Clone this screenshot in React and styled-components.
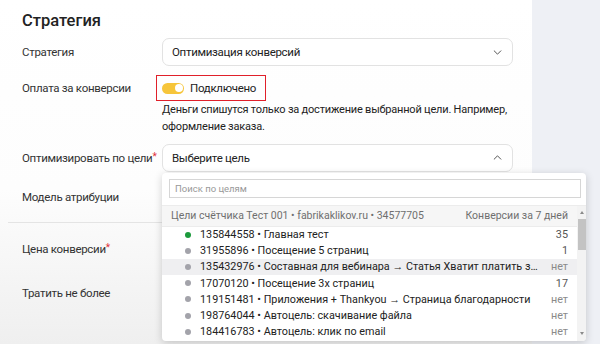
import React from "react";
import styled, { createGlobalStyle } from "styled-components";

const Global = createGlobalStyle`
  html, body { margin: 0; padding: 0; }
  body {
    font-family: Roboto, "Liberation Sans", Arial, sans-serif;
    color: #222;
    -webkit-font-smoothing: antialiased;
  }
`;

const Page = styled.div`
  width: 600px;
  height: 344px;
  display: flex;
  overflow: hidden;
`;

const Panel = styled.div`
  width: 532px;
  flex-shrink: 0;
  padding: 11px 0 0 22px;
  box-sizing: border-box;
  background: linear-gradient(#ffffff 0%, #fdfdfd 55%, #efefef 100%);
  position: relative;
`;

const Side = styled.div`
  flex: 1;
  background: #eef0f5;
`;

const Title = styled.h2`
  margin: 0 0 7px;
  font-size: 16.5px;
  line-height: 20px;
  font-weight: 500;
  color: #222;
`;

const Row = styled.div`
  display: grid;
  grid-template-columns: 140px 351px;
  align-items: ${(p) => p.$align || "center"};
  min-height: ${(p) => p.$h || 28}px;
  margin-top: ${(p) => p.$mt || 0}px;
  margin-bottom: ${(p) => p.$mb || 0}px;
`;

const Label = styled.div`
  font-size: 11.5px;
  letter-spacing: -0.3px;
  color: #333;
  white-space: nowrap;
`;

const Star = styled.span`
  color: #e0323b;
  font-size: 10px;
  vertical-align: top;
`;

const Field = styled.div`
  position: relative;
`;

const Select = styled.div`
  height: 28px;
  box-sizing: border-box;
  border: 1px solid #e2e2e2;
  border-radius: 7px;
  background: #fff;
  display: flex;
  align-items: center;
  justify-content: space-between;
  padding: 0 10px 0 9px;
  font-size: 11.5px;
  letter-spacing: -0.3px;
  color: #222;
`;

const Chevron = ({ up }) => (
  <svg width="9" height="5" viewBox="0 0 10 6" fill="none">
    <path
      d={up ? "M1 5L5 1L9 5" : "M1 1L5 5L9 1"}
      stroke="#555"
      strokeWidth="1.2"
      strokeLinecap="round"
      strokeLinejoin="round"
    />
  </svg>
);

const Highlight = styled.div`
  display: inline-flex;
  align-items: center;
  gap: 6px;
  height: 26px;
  box-sizing: border-box;
  margin-left: -6px;
  padding: 0 9px 0 5px;
  border: 1.5px solid #e0202a;
  font-size: 11.5px;
  letter-spacing: -0.3px;
  color: #222;
  justify-self: start;
`;

const Toggle = styled.div`
  width: 22px;
  height: 11px;
  border-radius: 6px;
  background: #f6c53a;
  position: relative;
  &::after {
    content: "";
    position: absolute;
    right: 1.5px;
    top: 1.5px;
    width: 8px;
    height: 8px;
    border-radius: 50%;
    background: #fff;
  }
`;

const Help = styled.div`
  grid-column: 2;
  font-size: 11px;
  letter-spacing: -0.2px;
  line-height: 17px;
  color: #222;
  white-space: nowrap;
  margin-bottom: 8px;
`;

const Divider = styled.div`
  height: 1px;
  background: #e4e4e4;
  margin: 9px 0 14px -14px;
`;

const Dropdown = styled.div`
  position: absolute;
  top: calc(100% + 1px);
  left: 0;
  width: 424px;
  height: 168px;
  background: #fff;
  border-radius: 4px;
  box-shadow: 0 2px 8px rgba(0, 0, 0, 0.18);
  z-index: 10;
  display: flex;
  flex-direction: column;
  overflow: hidden;
`;

const SearchWrap = styled.div`
  padding: 6px 5px 7px 7px;
  border-bottom: 1px solid #ececec;
`;

const Search = styled.div`
  height: 19px;
  box-sizing: border-box;
  border: 1px solid #d6d6d6;
  font-size: 9.5px;
  color: #999;
  display: flex;
  align-items: center;
  padding-left: 5px;
`;

const Body = styled.div`
  flex: 1;
  display: flex;
  min-height: 0;
`;

const List = styled.div`
  flex: 1;
  min-width: 0;
`;

const Head = styled.div`
  height: 20px;
  display: flex;
  align-items: center;
  justify-content: space-between;
  padding: 0 9px 0 9px;
  background: #f6f6f6;
  font-size: 10.5px;
  color: #6f6f6f;
  border-bottom: 1px solid #ececec;
`;

const Item = styled.div`
  height: 16.2px;
  display: flex;
  align-items: center;
  padding: 0 9px 0 23px;
  font-size: 10.8px;
  color: #222;
  background: ${(p) => (p.$active ? "#efeff1" : "transparent")};
`;

const Dot = styled.span`
  width: 6px;
  height: 6px;
  border-radius: 50%;
  background: ${(p) => (p.$green ? "#1c9a3c" : "#a3a3aa")};
  flex-shrink: 0;
  margin-right: 9px;
`;

const ItemText = styled.span`
  flex: 1;
  min-width: 0;
  white-space: nowrap;
  overflow: hidden;
  text-overflow: ellipsis;
`;

const Count = styled.span`
  flex-shrink: 0;
  margin-left: 10px;
  color: ${(p) => (p.$none ? "#8a8a8a" : "#555")};
`;

const Scrollbar = styled.div`
  width: 9px;
  background: #f3f3f3;
  display: flex;
  flex-direction: column;
  align-items: center;
  padding: 5px 0 6px;
  box-sizing: border-box;
`;

const Thumb = styled.div`
  width: 8px;
  height: 31px;
  margin-top: 5px;
  background: #c3c3c3;
`;

const Arrow = styled.div`
  width: 0;
  height: 0;
  border-left: 2.5px solid transparent;
  border-right: 2.5px solid transparent;
  ${(p) =>
    p.$up
      ? "border-bottom: 3px solid #8a8a8a;"
      : "border-top: 3px solid #8a8a8a; margin-top: auto;"}
`;

const goals = [
  { id: "135844558", name: "Главная тест", count: "35", green: true },
  { id: "31955896", name: "Посещение 5 страниц", count: "1" },
  {
    id: "135432976",
    name: "Составная для вебинара → Статья Хватит платить за клики и начните платить за конверсии",
    count: "нет",
    active: true,
  },
  { id: "17070120", name: "Посещение 3х страниц", count: "17" },
  { id: "119151481", name: "Приложения + Thankyou → Страница благодарности", count: "нет" },
  { id: "198764044", name: "Автоцель: скачивание файла", count: "нет" },
  { id: "184416783", name: "Автоцель: клик по email", count: "нет" },
];

export default function App() {
  return (
    <>
      <Global />
      <Page>
        <Panel>
          <Title>Стратегия</Title>
          <Row $mb={9}>
            <Label>Стратегия</Label>
            <Select>
              Оптимизация конверсий
              <Chevron />
            </Select>
          </Row>
          <Row $h={26}>
            <Label>Оплата за конверсии</Label>
            <Highlight>
              <Toggle />
              Подключено
            </Highlight>
          </Row>
          <Row>
            <Help>
              Деньги спишутся только за достижение выбранной цели. Например,
              <br />
              оформление заказа.
            </Help>
          </Row>
          <Row $h={29}>
            <Label>
              Оптимизировать по цели<Star>*</Star>
            </Label>
            <Field>
              <Select>
                Выберите цель
                <Chevron up />
              </Select>
              <Dropdown>
                <SearchWrap>
                  <Search>Поиск по целям</Search>
                </SearchWrap>
                <Body>
                  <List>
                    <Head>
                      <span>Цели счётчика Тест 001 • fabrikaklikov.ru • 34577705</span>
                      <span>Конверсии за 7 дней</span>
                    </Head>
                    {goals.map((g) => (
                      <Item key={g.id} $active={g.active}>
                        <Dot $green={g.green} />
                        <ItemText>
                          {g.id} • {g.name}
                        </ItemText>
                        <Count $none={g.count === "нет"}>{g.count}</Count>
                      </Item>
                    ))}
                  </List>
                  <Scrollbar>
                    <Arrow $up />
                    <Thumb />
                    <Arrow />
                  </Scrollbar>
                </Body>
              </Dropdown>
            </Field>
          </Row>
          <Row $h={32} $mt={9}>
            <Label>Модель атрибуции</Label>
          </Row>
          <Divider />
          <Row $h={24} $mb={20}>
            <Label>
              Цена конверсии<Star>*</Star>
            </Label>
          </Row>
          <Row $h={24}>
            <Label>Тратить не более</Label>
          </Row>
        </Panel>
        <Side />
      </Page>
    </>
  );
}
